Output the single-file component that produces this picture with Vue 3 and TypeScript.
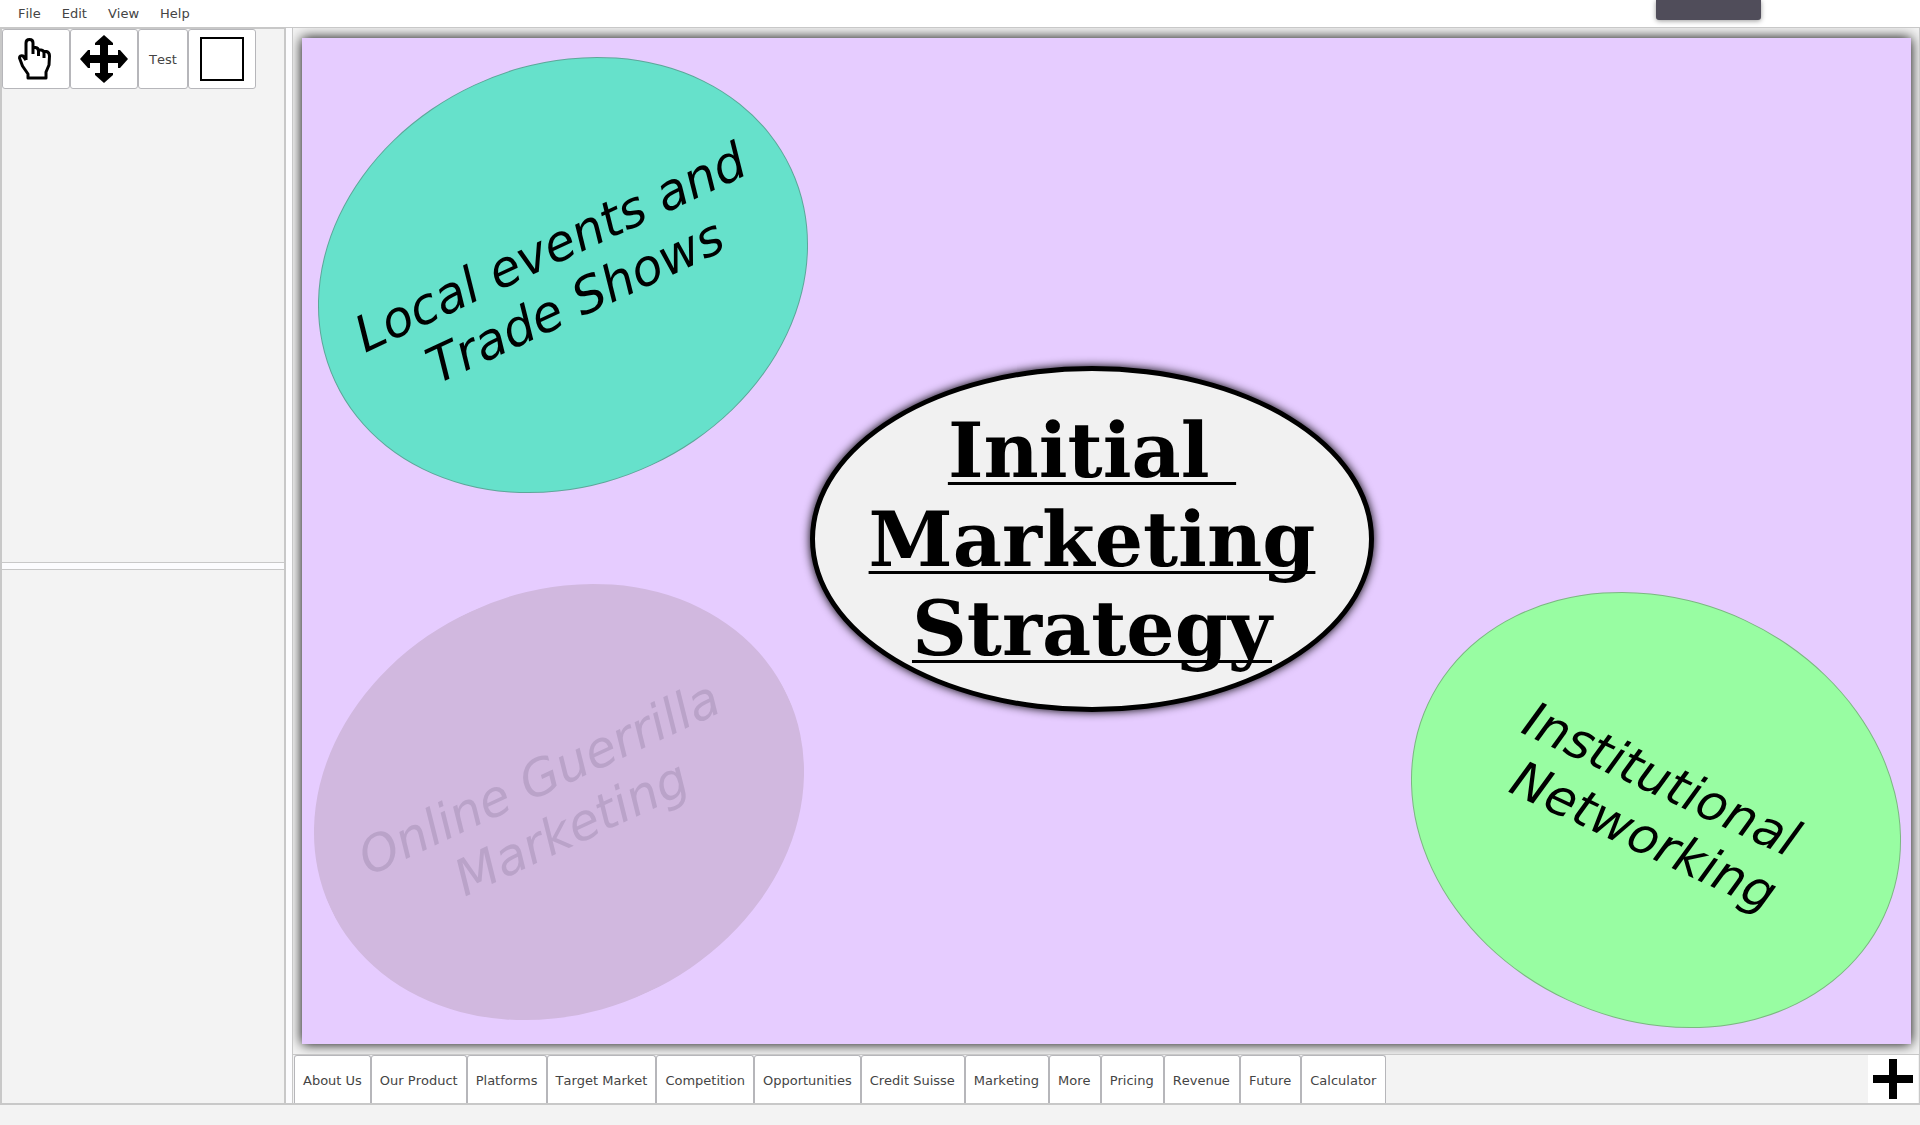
<script setup lang="ts">
interface Bubble {
  kind: string
  lines: string[]
}

const menus: string[] = ['File', 'Edit', 'View', 'Help']

const pages: string[] = [
  'About Us', 'Our Product', 'Platforms', 'Target Market', 'Competition',
  'Opportunities', 'Credit Suisse', 'Marketing', 'More', 'Pricing',
  'Revenue', 'Future', 'Calculator',
]

const bubbles: Bubble[] = [
  { kind: 'events', lines: ['Local events and', 'Trade Shows'] },
  { kind: 'online', lines: ['Online Guerrilla ', 'Marketing'] },
  { kind: 'network', lines: ['Institutional ', 'Networking'] },
  { kind: 'title', lines: ['Initial ', 'Marketing', 'Strategy'] },
]
</script>

<template>
  <div class="app">
    <header class="menubar">
      <nav class="menus">
        <button v-for="m in menus" :key="m" type="button" class="menu">{{ m }}</button>
      </nav>
      <div class="handle"></div>
    </header>

    <div class="workspace">
      <aside class="side">
        <section class="pane tools">
          <button type="button" class="tool wide" aria-label="Select">
            <svg width="36" height="42" viewBox="0 0 36 42" fill="none" stroke="#000" stroke-width="3" stroke-linejoin="round">
              <path d="M8 22V5Q8 1.500 11.500 1.500T15 5V16M15 9.500H17.500Q20.500 10 20.500 13V18M20.500 12H23Q26 12.500 26 15V20M26 13.500H28.500Q31.500 14.500 31.500 18L31 27L28 34V40H10V36L4.500 28L1.500 20Q1.500 17 5 18L8 22" />
            </svg>
          </button>
          <button type="button" class="tool wide" aria-label="Move">
            <svg width="48" height="48" viewBox="0 0 48 48" fill="#000">
              <path d="M24 0L33 8V10H28V20H38V15H40L48 24L40 33H38V28H28V38H33V40L24 48L15 40V38H20V28H10V33H8L0 24L8 15H10V20H20V10H15V8Z" />
            </svg>
          </button>
          <button type="button" class="tool">Test</button>
          <button type="button" class="tool wide" aria-label="Rectangle">
            <svg width="44" height="44" viewBox="0 0 44 44" fill="none" stroke="#000" stroke-width="2">
              <rect x="1" y="1" width="42" height="42" />
            </svg>
          </button>
        </section>
        <div class="splitter"></div>
        <section class="pane"></section>
      </aside>

      <div class="divider"></div>

      <main class="editor">
        <div class="stage">
          <div class="slide">
            <div v-for="b in bubbles" :key="b.kind" class="bubble" :class="b.kind">
              <div v-for="line in b.lines" :key="line" class="line">{{ line }}</div>
            </div>
          </div>
        </div>
        <nav class="pages">
          <button v-for="p in pages" :key="p" type="button" class="page">{{ p }}</button>
          <button type="button" class="add" aria-label="Add page">
            <svg width="40" height="40" viewBox="0 0 40 40" fill="#000">
              <path d="M16 0H24V16H40V24H24V40H16V24H0V16H16Z" />
            </svg>
          </button>
        </nav>
      </main>
    </div>

    <footer class="status"></footer>
  </div>
</template>

<style>
body {
  margin: 0;
}
</style>

<style scoped>
.app {
  display: flex;
  flex-direction: column;
  height: 100vh;
  background: #f3f3f3;
  color: #444;
  font: 13px "DejaVu Sans", sans-serif;
  font-kerning: none;
}

button {
  margin: 0;
  font: inherit;
  font-kerning: none;
  color: inherit;
  white-space: nowrap;
}

.menubar {
  position: relative;
  display: flex;
  flex: 0 0 27px;
  background: #fff;
}

.menus {
  display: flex;
  gap: 1px;
  padding-left: 8px;
}

.menu {
  padding: 0 10px;
  border: 0;
  background: none;
}

.handle {
  position: absolute;
  top: 0;
  right: 159px;
  width: 105px;
  height: 20px;
  border-radius: 0 0 3px 3px;
  background: #504d5a;
  box-shadow: 0 1px 5px rgba(0, 0, 0, 0.4);
}

.workspace {
  display: flex;
  flex: 1;
  min-height: 0;
  border-top: 1px solid #c8c8c8;
  border-bottom: 2px solid #c8c8c8;
}

.side {
  display: flex;
  flex-direction: column;
  flex: 0 0 282px;
  border: solid #c8c8c8;
  border-width: 1px 2px 0;
}

.pane {
  flex: 1 1 0;
}

.tools {
  display: flex;
  align-items: flex-start;
}

.tool {
  display: flex;
  align-items: center;
  justify-content: center;
  box-sizing: border-box;
  height: 60px;
  padding: 0 10px;
  border: 1px solid #b6b6ba;
  border-radius: 3px;
  background: #fff;
}

.tool.wide {
  width: 68px;
  padding: 0;
}

.splitter {
  flex: 0 0 6px;
  border: solid #c8c8c8;
  border-width: 1px 0;
  background: #fcfcfe;
}

.divider {
  flex: 0 0 6px;
  background: #fcfcfe;
}

.editor {
  display: flex;
  flex: 1;
  flex-direction: column;
  min-width: 0;
  border: solid #c8c8c8;
  border-width: 0 1px;
}

.stage {
  display: flex;
  flex: 1;
  padding: 10px 8px 10px 9px;
  overflow: hidden;
}

.slide {
  position: relative;
  flex: 1;
  background: #e6ccff;
  box-shadow: 0 0 12px #000;
}

.bubble {
  position: absolute;
  display: flex;
  flex-direction: column;
  align-items: center;
  justify-content: center;
  box-sizing: border-box;
  width: 504px;
  height: 420px;
  border: 1px solid rgba(80, 80, 80, 0.4);
  border-radius: 50%;
  color: #000;
  font: italic 50px/59px "DejaVu Sans", sans-serif;
  font-kerning: none;
}

.line {
  white-space: pre;
}

.events {
  left: 9px;
  top: 27px;
  background-color: #66e1cb;
  transform: rotate(-25deg);
}

.online {
  left: 5px;
  top: 554px;
  border-color: transparent;
  background-color: #d1b8df;
  color: #baa3c9;
  transform: rotate(-25deg);
}

.network {
  right: 3px;
  bottom: 24px;
  background-color: #98fda2;
  transform: rotate(25deg);
}

.title {
  left: 508px;
  top: 328px;
  width: 564px;
  height: 346px;
  border: 5px solid #000;
  background-color: #f1f1f1;
  box-shadow: 0 0 10px #000;
  font: bold 76px/89px "DejaVu Serif", serif;
  font-kerning: none;
  text-decoration: underline 3px;
  text-underline-offset: 5px;
  text-decoration-skip-ink: none;
  text-rendering: geometricPrecision;
}

.pages {
  display: flex;
  flex: 0 0 48px;
  padding: 0 1px;
  border-top: 1px solid #c8c8c8;
}

.page {
  padding: 2px 8px 0;
  border: 1px solid #b6b6ba;
  border-bottom: 0;
  border-radius: 3px 3px 0 0;
  background: #fff;
}

.page:nth-child(n + 7) {
  padding-right: 9px;
}

.add {
  display: flex;
  align-items: center;
  justify-content: center;
  width: 50px;
  margin-left: auto;
  padding: 0;
  border: 0;
  background: #fff;
}

.page + .add {
  padding: 0;
}

.status {
  flex: 0 0 20px;
}
</style>
